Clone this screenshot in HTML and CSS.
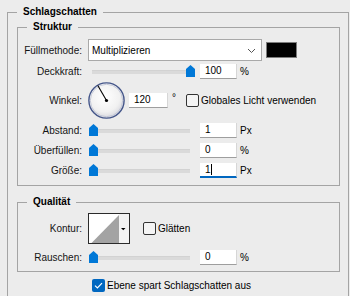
FILE: index.html
```html
<!DOCTYPE html>
<html lang="de">
<head>
<meta charset="utf-8">
<title>Schlagschatten</title>
<link rel="stylesheet" href="styles.css">
</head>
<body>
<div class="group outer">
  <div class="title">Schlagschatten</div>

  <div class="group inner struktur">
    <div class="title">Struktur</div>

    <div class="row r-mode">
      <span class="label">Füllmethode:</span>
      <div class="select">
        <span class="select-text">Multiplizieren</span>
        <svg class="chev" width="9" height="6" viewBox="0 0 9 6"><path d="M1 1 L4.5 4.5 L8 1" fill="none" stroke="#555" stroke-width="1"/></svg>
      </div>
      <div class="swatch"></div>
    </div>

    <div class="row r-slider">
      <span class="label">Deckkraft:</span>
      <div class="slider"><span class="thumb" style="left:98px"><svg width="9" height="12" viewBox="0 0 9 12"><path d="M0 4 L4.5 0 L9 4 V12 H0 Z" fill="#0078d7"/></svg></span></div>
      <div class="field">100</div>
      <span class="unit">%</span>
    </div>

    <div class="row r-angle">
      <span class="label">Winkel:</span>
      <svg class="dial" width="37" height="37" viewBox="0 0 37 37">
        <defs>
          <radialGradient id="dg" cx="45%" cy="40%" r="60%">
            <stop offset="0" stop-color="#ffffff"/>
            <stop offset="0.7" stop-color="#f1f1f1"/>
            <stop offset="1" stop-color="#d8d8de"/>
          </radialGradient>
        </defs>
        <circle cx="18.5" cy="18.5" r="17.6" fill="url(#dg)" stroke="#44568a" stroke-width="1.4"/>
        <circle cx="18.5" cy="18.5" r="16.2" fill="none" stroke="#b9bfd2" stroke-width="0.8"/>
        <line x1="18.5" y1="18.5" x2="9.8" y2="3.4" stroke="#000" stroke-width="1.1"/>
        <circle cx="18.5" cy="18.5" r="1.6" fill="#000"/>
      </svg>
      <div class="field field-angle">120</div>
      <span class="deg">°</span>
      <span class="check check-light"><span class="box"></span>Globales Licht verwenden</span>
    </div>

    <div class="row r-slider r-even">
      <span class="label">Abstand:</span>
      <div class="slider"><span class="thumb" style="left:1px"><svg width="9" height="12" viewBox="0 0 9 12"><path d="M0 4 L4.5 0 L9 4 V12 H0 Z" fill="#0078d7"/></svg></span></div>
      <div class="field">1</div>
      <span class="unit">Px</span>
    </div>

    <div class="row r-slider r-even">
      <span class="label">Überfüllen:</span>
      <div class="slider"><span class="thumb" style="left:1px"><svg width="9" height="12" viewBox="0 0 9 12"><path d="M0 4 L4.5 0 L9 4 V12 H0 Z" fill="#0078d7"/></svg></span></div>
      <div class="field">0</div>
      <span class="unit">%</span>
    </div>

    <div class="row r-slider r-even">
      <span class="label">Größe:</span>
      <div class="slider"><span class="thumb" style="left:1px"><svg width="9" height="12" viewBox="0 0 9 12"><path d="M0 4 L4.5 0 L9 4 V12 H0 Z" fill="#0078d7"/></svg></span></div>
      <div class="field field-focus">1<span class="caret"></span></div>
      <span class="unit">Px</span>
    </div>
  </div>

  <div class="group inner qual">
    <div class="title">Qualität</div>

    <div class="row r-contour">
      <span class="label">Kontur:</span>
      <svg class="contour" width="42" height="31" viewBox="0 0 42 31">
        <rect x="0.5" y="0.5" width="41" height="30" fill="#f3f3f3" stroke="#2b2b2b"/>
        <rect x="1" y="1" width="30" height="29" fill="#ffffff"/>
        <polygon points="3.5,30 31,30 31,2" fill="#a3a3a3"/>
        <polygon points="33,15 37.5,15 35.25,17.2" fill="#000"/>
      </svg>
      <span class="check"><span class="box"></span>Glätten</span>
    </div>

    <div class="row r-slider">
      <span class="label">Rauschen:</span>
      <div class="slider"><span class="thumb" style="left:1px"><svg width="9" height="12" viewBox="0 0 9 12"><path d="M0 4 L4.5 0 L9 4 V12 H0 Z" fill="#0078d7"/></svg></span></div>
      <div class="field">0</div>
      <span class="unit">%</span>
    </div>
  </div>

  <div class="row r-bottom">
    <span class="check check-on">
      <svg class="box-on" width="13" height="13" viewBox="0 0 13 13"><rect x="0" y="0" width="13" height="13" rx="2" fill="#0067c0"/><path d="M3 6.6 L5.4 9 L10 4.2" fill="none" stroke="#fff" stroke-width="1.2"/></svg>
      Ebene spart Schlagschatten aus
    </span>
  </div>
</div>
</body>
</html>
```

FILE: styles.css
```css
* { box-sizing: border-box; }

html, body {
  margin: 0;
  height: 100%;
  overflow: hidden;
}

body {
  background: #ececec;
  font-family: "Liberation Sans", Arial, sans-serif;
  font-size: 10px;
  color: #141414;
}

.group {
  border: 1px solid #a4a4a4;
}

.outer {
  margin: 12px 1px 0 7px;
  padding: 0 8px 0 9px;
  height: 285px;
}

.title {
  font-weight: bold;
  color: #000;
  line-height: 14px;
  margin-top: -8px;
  padding: 0 6px;
  background: #ececec;
  width: max-content;
}

.inner .title {
  margin-left: 9px;
}

.struktur {
  margin-top: 8px;
  padding-bottom: 5px;
}

.qual {
  margin-top: 16px;
  padding-bottom: 5px;
}

.row {
  display: flex;
  align-items: center;
}

.label {
  flex: none;
  width: 64px;
  margin-right: 6px;
  text-align: right;
}

.r-mode { height: 24px; margin-top: 4px; }
.r-slider { height: 18px; }
.r-even { height: 20px; }
.r-angle { height: 40px; }
.r-contour { height: 39px; }
.r-bottom { height: 15px; margin-top: 6px; }

/* dropdown */
.select {
  width: 174px;
  height: 22px;
  background: #fff;
  border: 1px solid #a9a9a9;
  display: flex;
  align-items: center;
  justify-content: space-between;
  padding: 0 5px 0 3px;
  color: #000;
}

.select-text { padding-top: 1px; }

.chev { display: block; margin-top: 1px; }

.swatch {
  width: 31px;
  height: 16px;
  margin-left: 4px;
  background: #000;
  border: 1px solid #7c7c7c;
}

/* slider */
.slider {
  position: relative;
  flex: none;
  width: 108px;
  height: 12px;
  margin-right: 4px;
}

.slider::before {
  content: "";
  position: absolute;
  left: 4px;
  right: 6px;
  top: 5px;
  height: 3px;
  background: #dadada;
  border-top: 1px solid #d2d2d2;
}

.thumb {
  position: absolute;
  top: 0;
  width: 9px;
  height: 12px;
}

.thumb svg { display: block; }

/* text fields */
.field {
  flex: none;
  width: 37px;
  height: 15px;
  line-height: 14px;
  padding-left: 5px;
  background: #fff;
  border-bottom: 1px solid #9e9e9e;
  border-right: 1px solid #d6d6d6;
  color: #000;
}

.field-angle {
  width: 39px;
}

.field-focus {
  border-bottom: 2px solid #0067c0;
  line-height: 13px;
  margin-top: 1px;
}

.caret {
  display: inline-block;
  width: 1px;
  height: 11px;
  background: #000;
  vertical-align: -2px;
}

.unit {
  margin-left: 3px;
  color: #000;
}

/* angle */
.dial {
  display: block;
  flex: none;
  margin-right: 4px;
}

.deg {
  margin-left: 4px;
  margin-top: -6px;
  color: #000;
}

/* checkboxes */
.check {
  display: flex;
  align-items: center;
  color: #000;
}

.check-light {
  margin-left: 10px;
}

.box {
  flex: none;
  width: 13px;
  height: 13px;
  border: 1px solid #333;
  border-radius: 2px;
  margin-right: 2px;
  background: #f4f4f4;
}

.contour {
  display: block;
  flex: none;
  margin-right: 13px;
}

.check-on {
  margin-left: 75px;
}

.box-on {
  display: block;
  margin-right: 2px;
}
```
